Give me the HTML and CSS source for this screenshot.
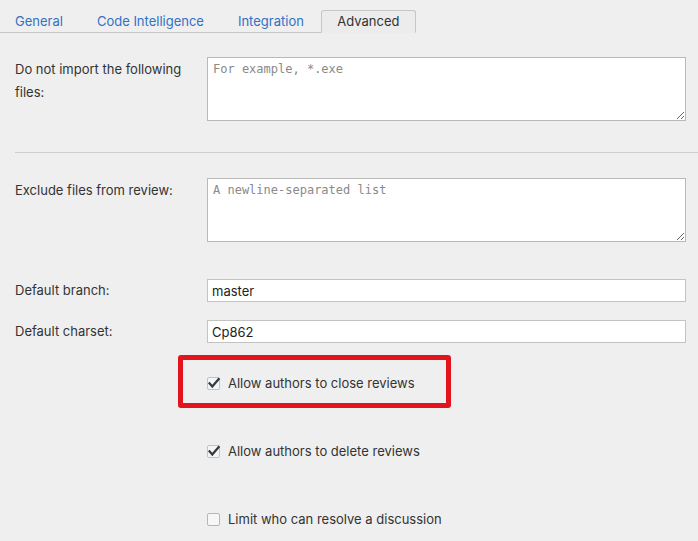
FILE: index.html
```html
<!DOCTYPE html>
<html>
<head>
<meta charset="utf-8">
<link rel="stylesheet" href="styles.css">
</head>
<body>
<div class="tabs">
  <a class="tab">General</a>
  <a class="tab">Code Intelligence</a>
  <a class="tab">Integration</a>
  <span class="tab active">Advanced</span>
</div>
<div class="form">
  <div class="row row-area first">
    <label class="lbl lbl-area">Do not import the following files:</label>
    <textarea class="area" placeholder="For example, *.exe"></textarea>
  </div>
  <div class="divider"></div>
  <div class="row row-area second">
    <label class="lbl lbl-area">Exclude files from review:</label>
    <textarea class="area" placeholder="A newline-separated list"></textarea>
  </div>
  <div class="row row-input branch">
    <label class="lbl">Default branch:</label>
    <input class="field" type="text" value="master">
  </div>
  <div class="row row-input charset">
    <label class="lbl">Default charset:</label>
    <input class="field" type="text" value="Cp862">
  </div>
  <div class="checks">
    <div class="check highlighted">
      <span class="box on"><svg viewBox="0 0 13 13" width="13" height="13"><path d="M2.6 6.4 L5.3 9.4 L11.6 2.2" fill="none" stroke="#3a3a3a" stroke-width="2.3" stroke-linecap="square"/></svg></span>
      <span class="ctext">Allow authors to close reviews</span>
      <span class="mark"></span>
    </div>
    <div class="check">
      <span class="box on"><svg viewBox="0 0 13 13" width="13" height="13"><path d="M2.6 6.4 L5.3 9.4 L11.6 2.2" fill="none" stroke="#3a3a3a" stroke-width="2.3" stroke-linecap="square"/></svg></span>
      <span class="ctext">Allow authors to delete reviews</span>
    </div>
    <div class="check">
      <span class="box"></span>
      <span class="ctext">Limit who can resolve a discussion</span>
    </div>
  </div>
</div>
</body>
</html>
```
FILE: styles.css
```css
html, body {
  margin: 0;
  padding: 0;
  background: #efefef;
  font-family: Inter, "Liberation Sans", Arial, sans-serif;
  font-size: 13px;
  color: #333;
  overflow: hidden;
}

.tabs {
  display: flex;
  margin-top: 10px;
  margin-left: -2px;
  height: 23px;
}

.tab {
  box-sizing: border-box;
  height: 23px;
  padding: 0 17px;
  line-height: 22px;
  color: #3271c6;
  border-bottom: 1px solid #c6c6c6;
  white-space: nowrap;
}

.tab.active {
  color: #333;
  background: #ececec;
  border: 1px solid #c6c6c6;
  border-bottom: 1px solid #ececec;
  border-radius: 3px 3px 0 0;
  line-height: 21px;
  width: 95px;
  padding: 0;
  text-align: center;
}

.form {
  padding: 0 12px 0 15px;
}

.row {
  display: grid;
  grid-template-columns: 192px 1fr;
  align-items: start;
}

.row.first { margin-top: 24px; }
.row.second { margin-top: 25px; }
.row.branch { margin-top: 37px; }
.row.charset { margin-top: 18px; }

.lbl {
  line-height: 23px;
  color: #333;
}

.lbl-area {
  padding-top: 1px;
  padding-right: 8px;
}

.area {
  box-sizing: border-box;
  height: 64px;
  width: 100%;
  margin: 0;
  padding: 4px 5px;
  border: 1px solid #b9b9b9;
  background: #fff;
  font-family: "DejaVu Sans Mono", "Liberation Mono", monospace;
  font-size: 12px;
  line-height: 15px;
  color: #333;
  resize: vertical;
  display: block;
}

.area::placeholder {
  color: #8a8a8a;
}

.divider {
  height: 1px;
  background: #cfcfcf;
  margin-top: 31px;
  margin-right: -12px;
}

.field {
  box-sizing: border-box;
  height: 23px;
  width: 100%;
  margin: 0;
  padding: 0 4px;
  border: 1px solid #c3c3c3;
  background: #fff;
  font-family: Inter, "Liberation Sans", Arial, sans-serif;
  font-size: 13px;
  color: #222;
  display: block;
}

.checks {
  margin-top: 30px;
  margin-left: 192px;
  display: flex;
  flex-direction: column;
  gap: 48px;
}

.check {
  position: relative;
  display: flex;
  align-items: center;
  gap: 8px;
  height: 20px;
}

.box {
  box-sizing: border-box;
  width: 13px;
  height: 13px;
  border: 1px solid #b7b7b7;
  border-radius: 2px;
  background: #f7f7f7;
  position: relative;
  flex: none;
}

.box.on {
  border-color: #9fcdec;
  background: #f2f6f9;
}

.box svg {
  position: absolute;
  left: -1px;
  top: -1px;
  overflow: visible;
}

.ctext {
  color: #333;
  font-size: 13px;
}

.mark {
  position: absolute;
  left: -29px;
  top: -18px;
  width: 273px;
  height: 53px;
  box-sizing: border-box;
  border: 5px solid #e2141e;
  border-radius: 3px;
  pointer-events: none;
}
```
